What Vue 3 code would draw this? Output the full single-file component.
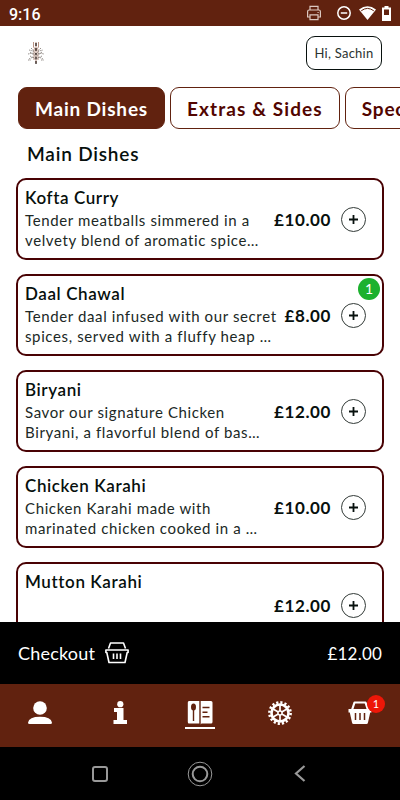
<template>
  <main>
    <div class="status">
      <span class="time">9:16</span>
      <svg class="printer" width="16" height="16" viewBox="0 0 16 16" fill="none" stroke="#dcc8c0" stroke-width="1.2">
        <path d="M4 5V1.400h8V5M3.800 12H1.600V6.500q0-1.500 1.500-1.500h9.800q1.500 0 1.500 1.500V12h-2.200M4 9.800h8v4.800H4zM11.500 7.500h1.200" />
      </svg>
      <svg class="dnd" width="14" height="14" viewBox="0 0 14 14" fill="none" stroke="#fff" stroke-width="1.500">
        <circle cx="7" cy="7" r="6.200" /><path d="M3.800 7h6.400" />
      </svg>
      <svg class="wifi" width="17" height="14" viewBox="0 0 17 14">
        <path d="M0 3.500Q8.500-3 17 3.500L8.500 14z" fill="#fff" />
        <path d="M2.200 4.800Q8.500 0 14.800 4.800" fill="none" stroke="#61220f" stroke-width="1" />
      </svg>
      <svg width="9" height="15" viewBox="0 0 9 15">
        <path d="M2.500 0h4v1.500H9V15H0V1.500h2.500z" fill="#fff" /><path d="M2 3.500h5V9H2z" fill="#61220f" />
      </svg>
    </div>

    <header>
      <svg class="logo" width="16" height="24" viewBox="0 0 16 24" fill="none">
        <path d="M8 1v21M5.500 1v5l2.500 3 2.500-3V1M6 8v11M10 8v11" stroke="#b99384" stroke-width="1" />
        <path d="M1 9l4 1 3 3 3-3 4-1M0 13l5-1 3 4 3-4 5 1M1 18l4-2 3 3 3-3 4 2M3 7l3 3M13 7l-3 3M2 11l4 3M14 11l-4 3M2 15l4 2M14 15l-4 2M0 19h3M13 19h3" stroke="#8b8580" stroke-width=".9" stroke-dasharray="1.500 .8" />
        <path d="M8 2v3M8 7v3M8 12v2M8 16v2M8 20v3" stroke="#302420" stroke-width="1.300" />
      </svg>
      <button class="user">Hi, Sachin</button>
    </header>

    <nav class="tabs">
      <button v-for="tab in tabs" :key="tab" :class="{ active: tab === activeTab }" @click="activeTab = tab">{{ tab }}</button>
    </nav>

    <h1>{{ activeTab }}</h1>

    <div class="dishes">
      <div v-for="dish in dishes" :key="dish.name" class="card">
        <div class="info">
          <h2>{{ dish.name }}</h2>
          <p>{{ dish.text }}</p>
        </div>
        <span class="price">£{{ dish.price }}</span>
        <button class="add" @click="dish.count++">
          <svg width="9" height="9" viewBox="0 0 9 9"><path d="M4.500 0v9M0 4.500h9" stroke="#07100d" stroke-width="1.800" /></svg>
        </button>
        <span v-if="dish.count" class="count">{{ dish.count }}</span>
      </div>
    </div>

    <div class="checkout">
      <span class="label">Checkout</span>
      <svg width="24" height="22" viewBox="0 0 24 22" fill="none" stroke="#fff" stroke-width="1.600" stroke-linejoin="round">
        <path d="M3.500 6.500L5.500 1h13l2 5.500M.9 8h22.200v2.500h-.9L20 20.500H4L1.800 10.500H.9zM8.500 11.500v5.500M12 11.500v5.500M15.500 11.500v5.500" />
      </svg>
      <span class="total">£12.00</span>
    </div>

    <nav class="bottom">
      <button>
        <svg width="26" height="24" viewBox="0 0 26 24" fill="#fff">
          <circle cx="13" cy="7" r="6.800" /><path d="M1 21.500q1-5.800 12-5.800t12 5.800q0 1.500-1.500 1.500h-21Q1 23 1 21.500z" />
        </svg>
      </button>
      <button>
        <svg width="14" height="24" viewBox="0 0 14 24" fill="#fff">
          <circle cx="7.300" cy="3.200" r="3.100" /><path d="M1 7h9.500v12H14v4H.5v-4H4v-8H1z" />
        </svg>
      </button>
      <button class="current">
        <svg width="26" height="24" viewBox="0 0 26 24">
          <path d="M2 0h10.300v22.500H2Q.8 22.500.8 21V1.500Q.8 0 2 0zM13.700 0H24q1.500 0 1.500 1.500V21q0 1.500-1.500 1.500H14.500l-.8 1z" fill="#fff" />
          <ellipse cx="6.500" cy="6" rx="2.500" ry="3.500" fill="#61220f" />
          <path d="M6.500 8v12M15.500 6.500h7M15.500 11.200h5M15.500 15.800h7" stroke="#61220f" stroke-width="1.400" />
        </svg>
      </button>
      <button>
        <svg width="24" height="24" viewBox="0 0 24 24" fill="none" stroke="#fff">
          <circle cx="12" cy="12" r="10.600" stroke-width="2.600" stroke-dasharray="2.180 1.983" />
          <circle cx="12" cy="12" r="8.500" stroke-width="2.600" />
          <path d="M12 4v16M5.070 8l13.860 8M5.070 16l13.860-8" stroke-width="1.700" />
          <circle cx="12" cy="12" r="2.800" fill="#fff" stroke="none" />
          <circle cx="12" cy="12" r="1.300" fill="#61220f" stroke="none" />
        </svg>
      </button>
      <button class="basket">
        <svg width="24" height="24" viewBox="0 0 24 24">
          <path d="M4 9l2.500-7.500h11L20 9" fill="none" stroke="#fff" stroke-width="2.200" stroke-linejoin="round" />
          <path d="M.5 8h23v3.500h-1.300L20 21.500q-.3 1.500-1.500 1.500h-13Q4.300 23 4 21.500L1.800 11.500H.5z" fill="#fff" />
          <path d="M7.500 12v7M12 12v7M16.500 12v7" stroke="#61220f" stroke-width="1.500" />
        </svg>
        <span class="badge">1</span>
      </button>
    </nav>

    <div class="system">
      <svg width="16" height="16" viewBox="0 0 16 16" fill="none" stroke="#999" stroke-width="2"><rect x="1" y="1" width="14" height="14" rx="2" /></svg>
      <svg width="26" height="26" viewBox="0 0 26 26" fill="none" stroke="#999"><circle cx="13" cy="13" r="11.800" /><circle cx="13" cy="13" r="7.300" stroke-width="2" /></svg>
      <svg width="12" height="17" viewBox="0 0 12 17" fill="none" stroke="#999" stroke-width="2.200"><path d="M10.500 1L2 8.500 10.500 16" /></svg>
    </div>
  </main>
</template>

<script setup>
import { ref } from 'vue'

const tabs = ['Main Dishes', 'Extras & Sides', 'Specials']
const activeTab = ref('Main Dishes')

const dishes = ref([
  { name: 'Kofta Curry', text: 'Tender meatballs simmered in a\nvelvety blend of aromatic spice…', price: '10.00', count: 0 },
  { name: 'Daal Chawal', text: 'Tender daal infused with our secret\nspices, served with a fluffy heap …', price: '8.00', count: 1 },
  { name: 'Biryani', text: 'Savor our signature Chicken\nBiryani, a flavorful blend of bas…', price: '12.00', count: 0 },
  { name: 'Chicken Karahi', text: 'Chicken Karahi made with\nmarinated chicken cooked in a …', price: '10.00', count: 0 },
  { name: 'Mutton Karahi', text: '', price: '12.00', count: 0 }
])
</script>

<style>
body {
  background: #fff;
}
</style>

<style scoped>
main {
  width: 400px;
  height: 800px;
  overflow: hidden;
  display: flex;
  flex-direction: column;
  font-family: Lato, "Open Sans", sans-serif;
  color: #07100d;
}

main > * {
  flex-shrink: 0;
  box-sizing: border-box;
}

button {
  font-family: inherit;
  color: inherit;
  background: none;
  border: none;
  padding: 0;
  margin: 0;
}

svg {
  display: block;
  flex-shrink: 0;
}

.status {
  height: 26px;
  background: #61220f;
  display: flex;
  align-items: center;
  padding: 0 9px;
}

.time {
  font: 500 16px Roboto, sans-serif;
  color: #fff;
  margin-right: auto;
  padding-top: 2px;
}

.printer {
  margin-right: 15px;
}

.dnd {
  margin-right: 8px;
}

.wifi {
  margin-right: 6px;
}

header {
  height: 61px;
  display: flex;
  justify-content: space-between;
  align-items: flex-start;
  padding: 10px 18px 0 28px;
}

.logo {
  margin-top: 5px;
}

.user {
  width: 76px;
  height: 34px;
  border: 1px solid #07100d;
  border-radius: 9px;
  font-size: 13px;
  letter-spacing: .25px;
  white-space: nowrap;
  color: #2b3330;
}

.tabs {
  height: 42px;
  display: flex;
  gap: 5px;
  padding-left: 18px;
}

.tabs button {
  flex-shrink: 0;
  height: 42px;
  padding: 0 16px;
  border: 1px solid #61220f;
  border-radius: 9px;
  font-size: 19px;
  font-weight: 700;
  letter-spacing: .8px;
  color: #520500;
}

.tabs button:nth-child(2) {
  letter-spacing: 1.1px;
}

.tabs .active {
  background: #61220f;
  color: #fff;
}

h1 {
  height: 49px;
  line-height: 50px;
  margin: 0;
  padding-left: 27px;
  font-size: 19px;
  font-weight: 600;
  letter-spacing: .8px;
}

.dishes {
  height: 444px;
  overflow: hidden;
  padding: 0 16px;
}

.card {
  position: relative;
  box-sizing: border-box;
  height: 82px;
  margin-bottom: 14px;
  padding: 0 16px 0 7px;
  border: 2px solid #490204;
  border-radius: 10px;
  display: flex;
  align-items: center;
}

.card:last-child {
  height: 86px;
}

.info {
  flex: 1;
  align-self: flex-start;
  padding-top: 7px;
}

h2 {
  margin: 0;
  font-size: 17px;
  line-height: 22px;
  font-weight: 600;
  letter-spacing: .6px;
}

p {
  margin: 1px 0 0;
  font-size: 15px;
  line-height: 20px;
  letter-spacing: .62px;
  white-space: pre;
  width: 240px;
  color: #202825;
}

.price {
  font-size: 17px;
  font-weight: 700;
  letter-spacing: .6px;
  margin-right: 10px;
}

.add {
  width: 25px;
  height: 25px;
  border: 1px solid #333b38;
  border-radius: 50%;
  display: flex;
  align-items: center;
  justify-content: center;
}

.count {
  position: absolute;
  right: 2px;
  top: 2px;
  width: 22px;
  height: 22px;
  line-height: 22px;
  border-radius: 50%;
  background: #1cb12e;
  color: #fff;
  font-size: 14px;
  text-align: center;
}

.checkout {
  height: 62px;
  background: #000;
  color: #fff;
  display: flex;
  align-items: center;
  padding: 0 18px;
  font-size: 18px;
}

.label {
  letter-spacing: .2px;
  margin-right: 10px;
}

.total {
  margin-left: auto;
  font-size: 17px;
  letter-spacing: .2px;
}

.bottom {
  height: 63px;
  background: #61220f;
  display: grid;
  grid-template-columns: repeat(5, 80px);
}

.bottom button {
  position: relative;
  display: flex;
  flex-direction: column;
  align-items: center;
  padding-top: 17px;
}

.current::after {
  content: "";
  width: 30px;
  height: 2px;
  margin-top: 2px;
  background: #fff;
}

.badge {
  position: absolute;
  left: 47px;
  top: 11px;
  width: 18px;
  height: 18px;
  line-height: 18px;
  border-radius: 50%;
  background: #ed1708;
  color: #fff;
  font-size: 11px;
  text-align: center;
}

.system {
  height: 53px;
  background: #000;
  display: grid;
  grid-template-columns: repeat(3, 100px);
  justify-content: center;
  align-items: center;
  justify-items: center;
}
</style>
